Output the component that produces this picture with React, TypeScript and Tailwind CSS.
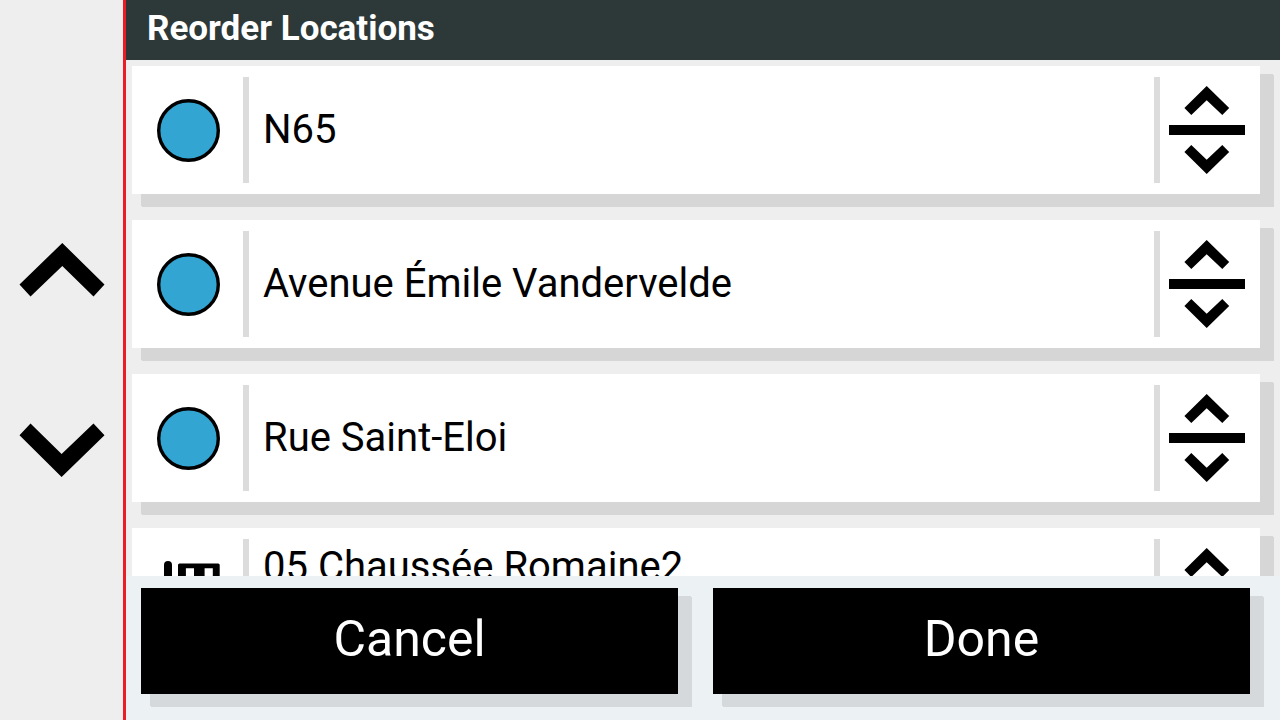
import React, { useState } from 'react'

type Location = {
  id: number
  name: string
  kind: 'stop' | 'building'
}

const initialLocations: Location[] = [
  { id: 1, name: 'N65', kind: 'stop' },
  { id: 2, name: 'Avenue Émile Vandervelde', kind: 'stop' },
  { id: 3, name: 'Rue Saint-Eloi', kind: 'stop' },
  { id: 4, name: '05 Chaussée Romaine2', kind: 'building' },
]

const PageUpIcon = () => (
  <svg width="86" height="54" viewBox="0 0 86 54" aria-hidden="true">
    <path d="M43.3 0 L85.5 41.5 L74.5 53.5 L43.3 23 L11.5 53.5 L.5 41.5 Z" />
  </svg>
)

const PageDownIcon = () => (
  <svg width="86" height="54" viewBox="0 0 86 54" aria-hidden="true">
    <path d="M42.6 54 L.5 12.2 L11.5 .4 L42.6 31 L74.5 .4 L85.5 12.2 Z" />
  </svg>
)

const ReorderIcon = () => (
  <svg width="76" height="88" viewBox="0 0 76 88" aria-hidden="true">
    <path d="M37.7 0 L60.2 22 L53.3 29 L37.7 14.3 L22.3 29 L15.4 22 Z" />
    <path d="M0 39 H76 V49 H0 Z" />
    <path d="M37.7 88 L60.2 66 L53.3 59 L37.7 73.7 L22.3 59 L15.4 66 Z" />
  </svg>
)

const StopIcon = () => (
  <svg width="63" height="63" viewBox="0 0 63 63" aria-hidden="true">
    <circle cx="31.5" cy="31.5" r="29.8" fill="#33a5d2" stroke="#000" strokeWidth="3.4" />
  </svg>
)

const BuildingIcon = () => (
  <svg width="63" height="63" viewBox="0 0 63 63" aria-hidden="true">
    <path d="M7 58 V4 A4 4 0 0 1 15 4 V58 Z" />
    <path
      fillRule="evenodd"
      d="M22.5 2.5 H61.2 Q62.7 2.5 62.7 4 V58 H21 V4 Q21 2.5 22.5 2.5 Z M28.9 7.2 V22 H37 V7.2 Z M47.6 7.2 V22 H55.8 V7.2 Z"
    />
  </svg>
)

const LocationRow = ({
  location,
  onMove,
}: {
  location: Location
  onMove: (id: number) => void
}) => {
  const isBuilding = location.kind === 'building'

  return (
    <li className="flex h-32 shrink-0 bg-white shadow-[11px_10px_0_2px_#d6d6d6,12px_11px_0_2px_#d6d6d6]">
      <div className="flex w-[111px] shrink-0 items-center justify-center pl-[2px]">
        {isBuilding ? <BuildingIcon /> : <StopIcon />}
      </div>
      <div className="my-[11px] w-[6px] shrink-0 bg-[#dcdcdc]" />
      <div
        className={
          isBuilding
            ? 'min-w-0 flex-1 pt-[15px] pl-[14px] text-[40px] leading-[48px] whitespace-nowrap'
            : 'min-w-0 flex-1 self-center pl-[14px] text-[40px] leading-[48px] whitespace-nowrap'
        }
      >
        {location.name}
      </div>
      <div className="my-[11px] w-[6px] shrink-0 bg-[#dcdcdc]" />
      <button
        className="flex w-[100px] shrink-0 items-center pl-[9px]"
        aria-label={`Move ${location.name}`}
        onClick={() => onMove(location.id)}
      >
        <ReorderIcon />
      </button>
    </li>
  )
}

const App = () => {
  const [locations, setLocations] = useState(initialLocations)

  // swap the location with the one below it
  const moveHandler = (id: number) => {
    const index = locations.findIndex((item) => item.id === id)
    if (index === locations.length - 1) return
    const next = [...locations]
    next[index] = locations[index + 1]
    next[index + 1] = locations[index]
    setLocations(next)
  }

  return (
    <div className="flex h-screen bg-[#eeeeee] font-[Roboto,sans-serif] text-black">
      <nav className="flex w-[126px] shrink-0 flex-col items-center justify-center gap-[126px] border-r-[3px] border-[#ec1c24]">
        <button aria-label="Page up">
          <PageUpIcon />
        </button>
        <button aria-label="Page down">
          <PageDownIcon />
        </button>
      </nav>
      <div className="flex min-w-0 flex-1 flex-col">
        <header className="h-[60px] shrink-0 bg-[#2d3838] px-[21px]">
          <h1 className="text-[35px] leading-[57px] font-bold text-white">
            Reorder Locations
          </h1>
        </header>
        <main className="min-h-0 flex-1 overflow-hidden">
          <ul className="flex flex-col gap-[26px] pt-[6px] pr-5 pl-[6px]">
            {locations.map((location) => (
              <LocationRow key={location.id} location={location} onMove={moveHandler} />
            ))}
          </ul>
        </main>
        <footer className="flex shrink-0 gap-[35px] bg-[#ecf1f4] pt-3 pr-[30px] pb-[26px] pl-[15px]">
          <button className="flex-1 bg-black pt-4 pb-5 text-[50px] leading-[70px] text-white shadow-[11px_10px_0_2px_#d5d9dc,12px_11px_0_2px_#d5d9dc]">
            Cancel
          </button>
          <button className="flex-1 bg-black pt-4 pb-5 text-[50px] leading-[70px] text-white shadow-[11px_10px_0_2px_#d5d9dc,12px_11px_0_2px_#d5d9dc]">
            Done
          </button>
        </footer>
      </div>
    </div>
  )
}

export default App
